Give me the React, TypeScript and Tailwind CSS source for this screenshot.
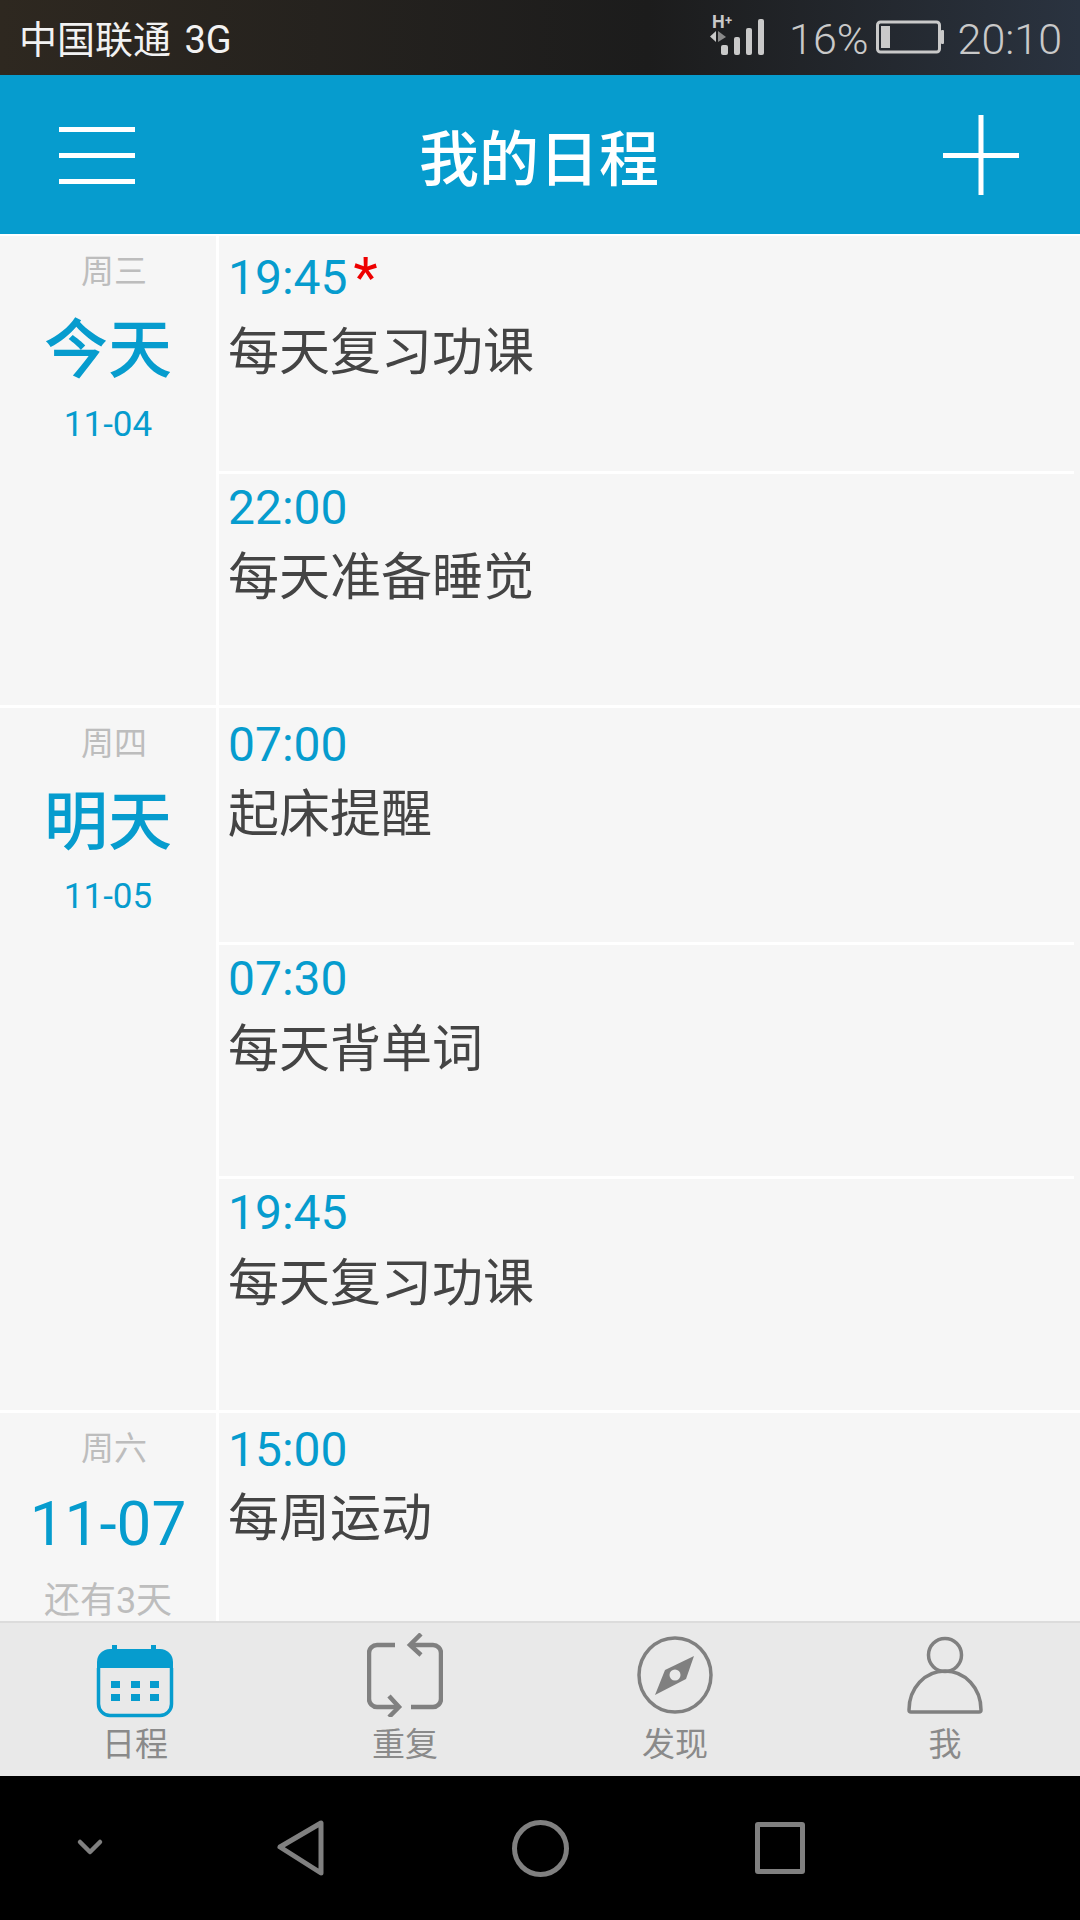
import React from "react";

const blue = "#069cce";

type Task = { time: string; title: string; star?: boolean; h: string; pt: string; gap: string };
type Day = {
  week: string;
  main: string;
  sub: string;
  subGray?: boolean;
  tasks: Task[];
};

const days: Day[] = [
  {
    week: "周三",
    main: "今天",
    sub: "11-04",
    tasks: [
      { time: "19:45", title: "每天复习功课", star: true, h: "h-[238px]", pt: "pt-[11px]", gap: "mt-[2px]" },
      { time: "22:00", title: "每天准备睡觉", h: "h-[231px]", pt: "pt-[3px]", gap: "-mt-[3px]" },
    ],
  },
  {
    week: "周四",
    main: "明天",
    sub: "11-05",
    tasks: [
      { time: "07:00", title: "起床提醒", h: "h-[237px]", pt: "pt-[6px]", gap: "-mt-[3px]" },
      { time: "07:30", title: "每天背单词", h: "h-[234px]", pt: "pt-[3px]", gap: "-mt-[2px]" },
      { time: "19:45", title: "每天复习功课", h: "h-[231px]", pt: "pt-[3px]", gap: "-mt-[2px]" },
    ],
  },
  {
    week: "周六",
    main: "11-07",
    sub: "还有3天",
    subGray: true,
    tasks: [{ time: "15:00", title: "每周运动", h: "h-[206px]", pt: "pt-[6px]", gap: "-mt-[4px]" }],
  },
];

function StatusBar() {
  return (
    <div className="h-[75px] shrink-0 flex items-center justify-between pt-[4px] pl-[19px] pr-[18px] bg-gradient-to-r from-[#2e2820] via-[#1c1c1c] via-60% to-[#2a3340] font-['Roboto','Noto_Sans_CJK_SC',sans-serif]">
      <span className="text-[38px] leading-none text-[#f2f2f2] whitespace-nowrap [word-spacing:4px]">中国联通 3G</span>
      <div className="flex items-center text-[43px] font-light leading-none text-[#c9c9c9]">
        <svg width="56" height="50" viewBox="0 0 56 50" className="mr-[23px] mb-[9px]" fill="#c9c9c9">
          <text x="2" y="18" fontSize="18" fontWeight="700" fontFamily="Roboto">H</text>
          <text x="15" y="15" fontSize="13" fontWeight="700" fontFamily="Roboto">+</text>
          <path d="M0 26.500l6-5.500v11z" />
          <path d="M8 21l8 6-8 5z" fill="#8a8a8a" />
          <rect x="11" y="35" width="7" height="10" rx="2" />
          <rect x="24" y="27" width="6" height="18" rx="2" />
          <rect x="36" y="18" width="6" height="27" rx="2" />
          <rect x="48" y="9" width="6" height="36" rx="2" />
        </svg>
        <span>16%</span>
        <svg width="68" height="34" viewBox="0 0 68 34" className="ml-[7px] mr-[14px] mb-[5px]">
          <rect x="1.500" y="2" width="62" height="30" rx="3" fill="none" stroke="#c9c9c9" strokeWidth="3" />
          <rect x="5" y="6" width="9" height="22" fill="#c9c9c9" />
          <rect x="65" y="10" width="3" height="14" rx="1" fill="#c9c9c9" />
        </svg>
        <span>20:10</span>
      </div>
    </div>
  );
}

function Header() {
  return (
    <div className="h-[159px] shrink-0 bg-[#069cce] flex items-center justify-between pl-[59px] pr-[61px] relative">
      <div className="w-[76px] flex flex-col gap-[21px] mt-[1px]">
        <div className="h-[5px] bg-white" />
        <div className="h-[5px] bg-white" />
        <div className="h-[5px] bg-white" />
      </div>
      <span className="text-[60px] leading-none font-medium text-white font-['Noto_Sans_CJK_SC',sans-serif]">我的日程</span>
      <svg width="76" height="80" viewBox="0 0 76 80" fill="#fff" className="mt-[1px]">
        <rect x="35.500" y="0" width="5" height="80" />
        <rect x="0" y="38" width="76" height="5" />
      </svg>
    </div>
  );
}

function DayGroup({ day }: { day: Day }) {
  const isDate = day.main === "11-07";
  return (
    <div className="flex border-b-[3px] border-white shrink-0">
      <div className="w-[216px] shrink-0 flex flex-col items-center pt-[9px] bg-[#f6f6f6]">
        <span className="text-[33px] leading-[48px] text-[#bdbdbd] ml-[12px] font-['Noto_Sans_CJK_SC',sans-serif]">{day.week}</span>
        <span className={`leading-[90px] text-[#069cce] font-['Roboto','Noto_Sans_CJK_SC',sans-serif] ${isDate ? "text-[62px] mt-[9px]" : "text-[64px] mt-[13px] font-medium"}`}>
          {day.main}
        </span>
        <span className={`leading-[52px] font-['Roboto','Noto_Sans_CJK_SC',sans-serif] ${day.subGray ? "text-[36px] mt-[6px] text-[#bdbdbd]" : "text-[35px] mt-[3px] text-[#069cce]"}`}>
          {day.sub}
        </span>
      </div>
      <div className="w-[3px] shrink-0 bg-white" />
      <div className="flex-1 flex flex-col">
        {day.tasks.map((task, i) => (
          <div key={i} className={`${task.h} ${task.pt} shrink-0 bg-[#f6f6f6] pl-[9px] relative`}>
            <div className="flex items-start text-[48px] leading-[62px] text-[#069cce] font-['Roboto',sans-serif]">
              <span>{task.time}</span>
              {task.star && <span className="text-[#ee0000] text-[56px] leading-[62px] ml-[6px]">*</span>}
            </div>
            <div className={`text-[51px] leading-[74px] text-[#444444] ${task.gap} font-['Noto_Sans_CJK_SC',sans-serif]`}>{task.title}</div>
            {i < day.tasks.length - 1 && (
              <div className="absolute left-0 right-[6px] bottom-0 h-[3px] bg-white" />
            )}
          </div>
        ))}
      </div>
    </div>
  );
}

function TabBar() {
  const gray = "#808080";
  return (
    <div className="h-[155px] shrink-0 bg-[#e9e9e9] border-t-[2px] border-[#dcdcdc] grid grid-cols-4 font-['Noto_Sans_CJK_SC',sans-serif]">
      <div className="flex flex-col items-center">
        <svg width="78" height="74" viewBox="0 0 78 74" className="mt-[21px] mb-[4px]">
          <path d="M16 1h5v6h-5zM55 1h5v6h-5z" fill={blue} />
          <path d="M14 5h50a13 13 0 0 1 13 13v6H1v-6A13 13 0 0 1 14 5z" fill={blue} />
          <path d="M2.500 24v36a11.500 11.500 0 0 0 11.500 11.500h50a11.500 11.500 0 0 0 11.500-11.500V24" fill="none" stroke={blue} strokeWidth="3.500" />
          <path d="M15 37h9v7h-9zM35 37h9v7h-9zM54 37h9v7h-9zM15 50h9v7h-9zM35 50h9v7h-9zM54 50h9v7h-9z" fill={blue} />
        </svg>
        <span className="text-[33px] leading-[40px] text-[#8a8a8a]">日程</span>
      </div>
      <div className="flex flex-col items-center">
        <svg width="76" height="84" viewBox="0 0 76 84" className="mt-[10px] mb-[5px]" fill="none" stroke={gray} strokeWidth="4.500">
          <path d="M28 12H10a8 8 0 0 0-8 8v46a8 8 0 0 0 8 8h20" />
          <path d="M22 63l10 11-10 10" />
          <path d="M44 74h22a8 8 0 0 0 8-8V20a8 8 0 0 0-8-8H44" />
          <path d="M54 1L43 12l11 10" />
        </svg>
        <span className="text-[33px] leading-[40px] text-[#8a8a8a]">重复</span>
      </div>
      <div className="flex flex-col items-center">
        <svg width="76" height="78" viewBox="0 0 76 78" className="mt-[13px] mb-[8px]">
          <ellipse cx="38" cy="39" rx="36" ry="37" fill="none" stroke={gray} strokeWidth="3.500" />
          <path d="M57 20L49 43 18 59l10-25z" fill={gray} />
          <circle cx="38" cy="39" r="5.500" fill="#e9e9e9" />
        </svg>
        <span className="text-[33px] leading-[40px] text-[#8a8a8a]">发现</span>
      </div>
      <div className="flex flex-col items-center">
        <svg width="76" height="78" viewBox="0 0 76 78" className="mt-[13px] mb-[8px]" fill="none" stroke={gray} strokeWidth="3.500">
          <circle cx="38" cy="19" r="16.500" />
          <path d="M2 74c0-22 16-39 36-39s36 17 36 39c0 1.200-.8 2-2 2H4c-1.200 0-2-.8-2-2z" strokeLinejoin="round" />
        </svg>
        <span className="text-[33px] leading-[40px] text-[#8a8a8a]">我</span>
      </div>
    </div>
  );
}

function NavBar() {
  return (
    <div className="h-[144px] shrink-0 bg-black grid grid-cols-[180px_240px_240px_240px_180px] items-center">
      <div className="flex justify-center">
        <svg width="28" height="20" viewBox="0 0 28 20" fill="none" stroke="#808080" strokeWidth="4.500" strokeLinecap="round" strokeLinejoin="round">
          <path d="M4 4l10 10L24 4" />
        </svg>
      </div>
      <div className="flex justify-center">
        <svg width="52" height="60" viewBox="0 0 52 60" fill="none" stroke="#808080" strokeWidth="5" strokeLinejoin="round" className="ml-[2px]">
          <path d="M5 29L46 5v50z" />
        </svg>
      </div>
      <div className="flex justify-center">
        <div className="w-[57px] h-[57px] rounded-full border-[5px] border-[#808080]" />
      </div>
      <div className="flex justify-center">
        <div className="w-[50px] h-[52px] rounded-[3px] border-[5px] border-[#808080]" />
      </div>
      <div />
    </div>
  );
}

export default function App() {
  return (
    <div className="w-[1080px] h-[1920px] flex flex-col overflow-hidden bg-white">
      <StatusBar />
      <Header />
      <div className="h-[2px] shrink-0 bg-white" />
      <div className="flex-1 min-h-0 overflow-hidden flex flex-col bg-[#f6f6f6]">
        {days.map((d, i) => (
          <DayGroup key={i} day={d} />
        ))}
      </div>
      <TabBar />
      <NavBar />
    </div>
  );
}
